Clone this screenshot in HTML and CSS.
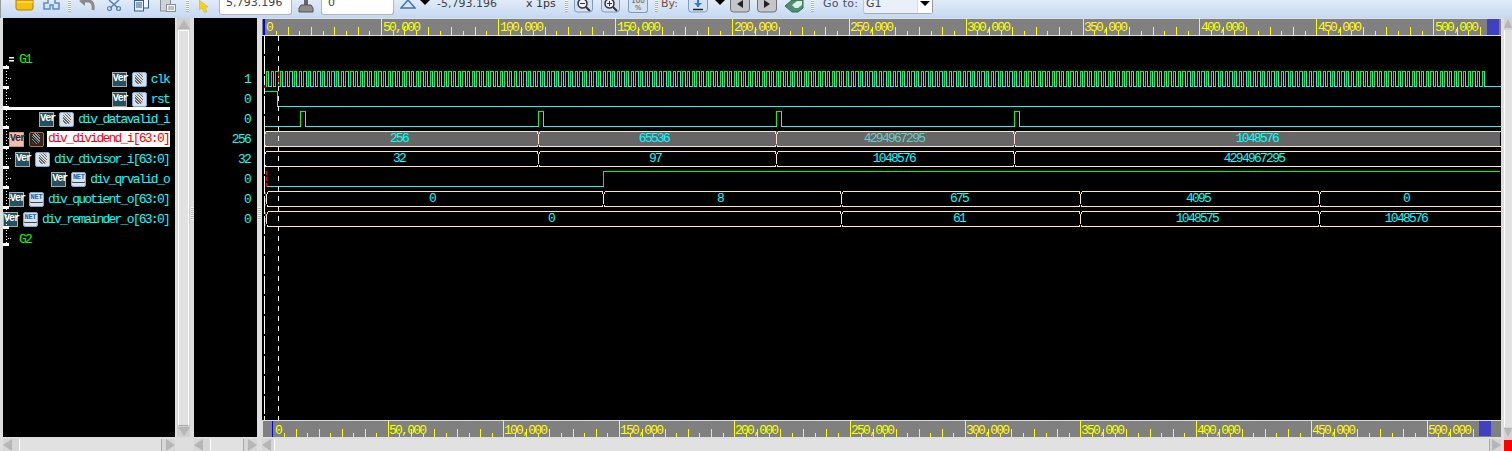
FILE: index.html
```html
<!DOCTYPE html>
<html lang="en">
<head>
<meta charset="utf-8">
<title>nWave</title>
<link rel="stylesheet" href="styles.css">
</head>
<body>
<header class="toolbar">
  <svg class="ti folder" width="19" height="11" viewBox="0 0 19 11"><path d="M1 0H18V1L18 8Q18 10 16 10H3Q1 10 1 8Z" fill="#f4c20d" stroke="#a98208"/><path d="M2 2H18" stroke="#ffe680"/></svg>
  <svg class="ti hier" width="17" height="10" viewBox="0 0 17 10"><path d="M5 0V3H1V9H7V5H10V9H16V3H12V0" fill="none" stroke="#5b8cc4" stroke-width="1.5"/></svg>
  <span class="grip g1"></span>
  <svg class="ti undo" width="16" height="11" viewBox="0 0 16 11"><path d="M4 1H10Q15 2 14 10" fill="none" stroke="#8b8b8b" stroke-width="3"/><path d="M0 1L6 -3V6Z" fill="#8b8b8b"/></svg>
  <svg class="ti scis" width="14" height="11" viewBox="0 0 14 11"><path d="M2 0L11 8M12 0L3 8" stroke="#5680b0" stroke-width="1.5"/><circle cx="2.500" cy="8.500" r="2" fill="none" stroke="#5680b0" stroke-width="1.200"/><circle cx="11.500" cy="8.500" r="2" fill="none" stroke="#5680b0" stroke-width="1.200"/></svg>
  <svg class="ti copy" width="15" height="12" viewBox="0 0 15 12"><rect x="4.500" y="-3" width="10" height="11" fill="#f4f7fb" stroke="#2f5f9c"/><rect x=".5" y="0.500" width="9" height="10.500" fill="#e8eef6" stroke="#2f5f9c"/><path d="M2 3H8M2 5H8M2 7H8" stroke="#2f5f9c"/></svg>
  <svg class="ti paste" width="16" height="12" viewBox="0 0 16 12"><rect x=".5" y="-2" width="10" height="13" fill="#cfd3d8" stroke="#8a8f96"/><rect x="6.500" y="4.500" width="9" height="7" fill="#f0f2f4" stroke="#8a8f96"/><path d="M8 7H14M8 9H14" stroke="#8a8f96"/></svg>
  <span class="grip g2"></span>
  <svg class="ti cursor" width="10" height="13" viewBox="0 0 10 13"><path d="M0 0L9 7H6L8 12L5 12L3 8L0 10Z" fill="#fbd20f" stroke="#d4a80a" stroke-width=".5"/></svg>
  <div class="field f1">5,793.196</div>
  <svg class="ti stamp" width="16" height="13" viewBox="0 0 16 13"><path d="M6 0H10V5H6Z" fill="#666"/><path d="M3 5H13L15 8V12H1V8Z" fill="#8d8d8d" stroke="#555"/></svg>
  <div class="field f2">0</div>
  <svg class="ti tri" width="16" height="9" viewBox="0 0 16 9"><path d="M8 0L15 8H1Z" fill="#dbe6f5" stroke="#3f74b5" stroke-width="1.500"/></svg>
  <span class="drop d1"></span>
  <span class="tl delta">-5,793.196</span>
  <span class="tl unit">x 1ps</span>
  <span class="grip g3"></span>
  <svg class="ti tb zo" width="19" height="13" viewBox="0 0 19 13"><rect x=".5" y="-4" width="18" height="16" rx="3" fill="#d4e1f2" stroke="#7d9bbf"/><circle cx="8.500" cy="3.500" r="4.500" fill="#eef" stroke="#333" stroke-width="1.500"/><path d="M6 3.500H11" stroke="#333"/><path d="M12 7L16 11" stroke="#333" stroke-width="2"/></svg>
  <svg class="ti tb zi" width="19" height="13" viewBox="0 0 19 13"><rect x=".5" y="-4" width="18" height="16" rx="3" fill="#d4e1f2" stroke="#7d9bbf"/><circle cx="8.500" cy="3.500" r="4.500" fill="#eef" stroke="#333" stroke-width="1.500"/><path d="M6 3.500H11M8.500 1V6" stroke="#333"/><path d="M12 7L16 11" stroke="#333" stroke-width="2"/></svg>
  <div class="pct"><span>100</span><span>%</span></div>
  <span class="grip g4"></span>
  <span class="tl by">By:</span>
  <svg class="ti tb byb" width="20" height="13" viewBox="0 0 20 13"><rect x=".5" y="-4" width="19" height="16" rx="3" fill="#d4e1f2" stroke="#7d9bbf"/><path d="M10 0V7" stroke="#3a78d8" stroke-width="2"/><path d="M6 3L10 7L14 3" fill="#3a78d8"/><path d="M5 9.500H15" stroke="#222" stroke-width="1.500"/></svg>
  <span class="drop d2"></span>
  <svg class="ti nl" width="20" height="13" viewBox="0 0 20 13"><rect x=".5" y="-4" width="19" height="16" rx="3" fill="#c4c6c9" stroke="#6e7073"/><path d="M13 0V8L7 4Z" fill="#222"/></svg>
  <svg class="ti nr" width="20" height="13" viewBox="0 0 20 13"><rect x=".5" y="-4" width="19" height="16" rx="3" fill="#c4c6c9" stroke="#6e7073"/><path d="M7 0V8L13 4Z" fill="#222"/></svg>
  <svg class="ti grn" width="20" height="13" viewBox="0 0 20 13"><path d="M1 6L8 0H19V8L14 12H8Z" fill="#4d8f72" stroke="#2f6b52"/><path d="M8 5L13 1H18V5L14 8H11Z" fill="#dcefe6"/></svg>
  <span class="grip g5"></span>
  <span class="tl goto">Go to:</span>
  <div class="combo"><span class="combo-v">G1</span><span class="combo-b"><span class="drop d3"></span></span></div>
</header>

<main class="main">
  <section class="col c-sig">
    <div class="pane sig-pane">
      <svg class="tree" id="tree" width="14" height="419" viewBox="0 0 14 419"></svg>
      <div class="insert"></div>
      <div class="row grp">G1</div>
      <div class="row"><span class="ver">Ver</span><span class="wire"></span><span class="nm">clk</span></div>
      <div class="row"><span class="ver">Ver</span><span class="wire"></span><span class="nm">rst</span></div>
      <div class="row"><span class="ver">Ver</span><span class="wire"></span><span class="nm">div_datavalid_i</span></div>
      <div class="row sel"><span class="ver">Ver</span><span class="wire"></span><span class="nm">div_dividend_i[63:0]</span></div>
      <div class="row"><span class="ver">Ver</span><span class="wire"></span><span class="nm">div_divisor_i[63:0]</span></div>
      <div class="row"><span class="ver">Ver</span><span class="net">NET</span><span class="nm">div_qrvalid_o</span></div>
      <div class="row"><span class="ver">Ver</span><span class="net">NET</span><span class="nm">div_quotient_o[63:0]</span></div>
      <div class="row"><span class="ver">Ver</span><span class="net">NET</span><span class="nm">div_remainder_o[63:0]</span></div>
      <div class="row grp">G2</div>
    </div>
    <div class="hs"><span class="al"></span><span class="thumb"></span><span class="ar"></span></div>
  </section>

  <section class="vs">
    <span class="au"></span><span class="vthumb"></span><span class="ad"></span>
  </section>
  <div class="split s1"><span class="sgrip"></span></div>

  <section class="col c-val">
    <div class="pane val-pane">
      <div class="val">1</div><div class="val">0</div><div class="val">0</div><div class="val">256</div>
      <div class="val">32</div><div class="val">0</div><div class="val">0</div><div class="val">0</div>
    </div>
    <div class="hs"><span class="al"></span><span class="thumb"></span><span class="ar"></span></div>
  </section>
  <div class="split s2"><span class="sgrip"></span></div>

  <section class="col c-wave">
    <svg class="wave" id="wave" width="1239" height="419" viewBox="262 18 1239 419">
      <rect class="rul" x="262" y="19" width="1239" height="16"/>
      <rect class="rline" x="262" y="35" width="1239" height="1"/>
      <rect class="blk" x="262" y="36" width="1239" height="384"/>
      <rect class="rline" x="262" y="420" width="1239" height="1"/>
      <rect class="rul" x="263" y="421" width="1238" height="16"/>
      <rect class="thumbb" x="1487" y="19" width="12" height="16"/>
      <rect class="thumbb" x="1479" y="421" width="12" height="15"/>
      <rect class="bluel" x="263" y="19" width="2" height="16"/>
      <rect class="bluel" x="272" y="421" width="1" height="16"/>
      <g id="ticks" class="tick"></g>
      <g class="rt">
        <text x="266" y="31">0</text><text x="383" y="31">50,000</text><text x="500" y="31">100,000</text><text x="617" y="31">150,000</text><text x="734" y="31">200,000</text><text x="850" y="31">250,000</text><text x="967" y="31">300,000</text><text x="1084" y="31">350,000</text><text x="1201" y="31">400,000</text><text x="1318" y="31">450,000</text><text x="1435" y="31">500,000</text>
        <text x="275" y="434">0</text><text x="389" y="434">50,000</text><text x="504" y="434">100,000</text><text x="620" y="434">150,000</text><text x="735" y="434">200,000</text><text x="851" y="434">250,000</text><text x="966" y="434">300,000</text><text x="1081" y="434">350,000</text><text x="1197" y="434">400,000</text><text x="1312" y="434">450,000</text><text x="1428" y="434">500,000</text>
      </g>
      <rect class="busfill" x="265" y="131" width="1235" height="15"/>
      <path id="bus" class="bus" d=""/>
      <path id="hi" class="hi" d=""/>
      <path id="lo" class="lo" d=""/>
      <path class="marker m1" d="M264.500 36V420"/>
      <path class="marker m2" d="M278.500 36V420"/>
      <path class="red" d="M265.500 171.500H266.500V186.500H265.500M265.500 192V206M265.500 212V226M278.500 72V86M264.500 85V88"/>
      <g class="wt">
        <text x="399" y="142">256</text><text x="654" y="142">65536</text><text x="894" y="142" class="dim">4294967295</text><text x="1257" y="142">1048576</text>
        <text x="399" y="162">32</text><text x="655" y="162">97</text><text x="894" y="162">1048576</text><text x="1254" y="162">4294967295</text>
        <text x="432" y="202">0</text><text x="720" y="202">8</text><text x="959" y="202">675</text><text x="1198" y="202">4095</text><text x="1406" y="202">0</text>
        <text x="551" y="222">0</text><text x="959" y="222">61</text><text x="1197" y="222">1048575</text><text x="1406" y="222">1048576</text>
      </g>
    </svg>
    <div class="hs"><span class="al"></span><span class="thumb"></span><span class="ar ar-w"></span></div>
  </section>

  <section class="rs">
    <span class="au au-r"></span><span class="rtrack"></span><span class="ad ad-r"></span>
    <span class="redsq"></span>
  </section>
</main>
<script src="script.js"></script>
</body>
</html>
```
FILE: styles.css
```css
* { box-sizing: border-box; }
html, body { margin: 0; padding: 0; }
body {
  width: 1512px;
  height: 451px;
  overflow: hidden;
  background: #dedede;
  font-family: "Liberation Mono", monospace;
  display: flex;
  flex-direction: column;
}

/* toolbar, cut off by the top of the picture */
.toolbar {
  height: 18px;
  flex: none;
  display: flex;
  align-items: flex-start;
  overflow: hidden;
  padding-left: 1px;
  border-left: 1px solid #9a9a9a;
  background: linear-gradient(#e1ebf8, #c5d8f2);
  font-family: "DejaVu Sans", sans-serif;
  font-size: 11px;
  color: #44526a;
}
.ti { flex: none; display: block; }
.folder { margin-left: 13px; }
.hier { margin-left: 9px; }
.undo { margin-left: 8px; }
.scis { margin-left: 12px; }
.copy { margin-left: 13px; }
.paste { margin-left: 11px; }
.cursor { margin-left: 10px; }
.stamp { margin-left: 6px; }
.tri { margin-left: 6px; }
.zo { margin-left: 6px; }
.zi { margin-left: 8px; }
.byb { margin-left: 9px; }
.nl { margin-left: 5px; }
.nr { margin-left: 7px; }
.grn { margin-left: 7px; }

.grip {
  flex: none;
  width: 3px;
  height: 12px;
  background: repeating-linear-gradient(#ffffff 0 1px, #a9b2bd 1px 2px);
}
.g1 { margin-left: 8px; }
.g2 { margin-left: 10px; }
.g3 { margin-left: 9px; }
.g4 { margin-left: 7px; }
.g5 { margin-left: 7px; }

.field {
  flex: none;
  width: 73px;
  height: 16px;
  margin-top: -1px;
  padding-left: 6px;
  background: #fff;
  border: 1px solid #b5b5b5;
  border-top: 0;
  border-radius: 0 0 3px 3px;
  color: #444;
  line-height: 8px;
  letter-spacing: .05px;
}
.f1 { margin-left: 10px; }
.f2 { margin-left: 7px; }

.drop {
  flex: none;
  width: 0;
  height: 0;
  border-left: 5px solid transparent;
  border-right: 5px solid transparent;
  border-top: 5px solid #000;
}
.d1 { margin-left: 4px; }
.d2 { margin-left: 7px; }

.tl { flex: none; white-space: nowrap; line-height: 8px; }
.delta { margin-left: 7px; width: 60px; color: #444; }
.unit { margin-left: 29px; width: 30px; color: #333; }
.by { margin-left: 3px; width: 18px; color: #7a4a3a; }
.goto { margin-left: 9px; width: 34px; letter-spacing: .3px; }

.pct {
  flex: none;
  width: 20px;
  height: 13px;
  margin-left: 8px;
  background: #d4e1f2;
  border: 1px solid #7d9bbf;
  border-top: 0;
  border-radius: 0 0 3px 3px;
  font-size: 7px;
  line-height: 7px;
  color: #555;
  text-align: center;
  display: flex;
  flex-direction: column;
  justify-content: flex-end;
}
.combo {
  flex: none;
  width: 70px;
  height: 14px;
  margin-left: 6px;
  display: flex;
  background: #e9f0fa;
  border-right: 1px solid #999;
  border-bottom: 1px solid #aaa;
  border-left: 1px solid #c5c5c5;
  border-radius: 0 0 3px 3px;
}
.combo-v { flex: 1; padding-left: 2px; line-height: 8px; color: #444; }
.combo-b {
  width: 15px;
  background: #fff;
  display: flex;
  justify-content: center;
  padding-top: 1px;
  border-left: 1px solid #ddd;
}

/* main panes */
.main { flex: 1; display: flex; min-height: 0; }
.col { flex: none; display: flex; flex-direction: column; }
.c-sig { width: 172px; margin-left: 3px; }
.c-val { width: 63px; }
.c-wave { width: 1239px; }
.pane { flex: 1; background: #000; min-height: 0; position: relative; }

.sig-pane { padding: 31px 5px 0 0; overflow: hidden; }
.row {
  height: 20px;
  display: flex;
  justify-content: flex-end;
  align-items: center;
  font-size: 13px;
  letter-spacing: -1.75px;
  color: #00ffff;
  white-space: nowrap;
}
.grp { justify-content: flex-start; padding: 1px 0 0 16px; color: #00ff00; }
.nm { margin-left: 4px; padding: 1px 1px 0 0; }
.sel .nm {
  margin-left: 3px;
  padding: 0 1px;
  background: #fff;
  color: #ff0000;
  line-height: 16px;
}
.ver {
  flex: none;
  width: 15px;
  height: 15px;
  background: #24505f;
  border: 1px solid #a8a8a8;
  color: #fff;
  font-size: 10px;
  font-weight: bold;
  letter-spacing: -1px;
  line-height: 12px;
  text-align: center;
}
.sel .ver { background: #f2bfae; color: #2a2a2a; border-color: #c98; }
.wire, .net {
  flex: none;
  width: 15px;
  height: 15px;
  margin-left: 5px;
  background: #d5e2f0;
  border: 1px solid #7ea6d0;
  border-radius: 2px;
  display: flex;
  justify-content: center;
}
.wire::before {
  content: "";
  width: 8px;
  height: 11px;
  border-radius: 4px;
  background: repeating-linear-gradient(45deg, #666 0 1px, #dcdcdc 1px 2px);
}
.sel .wire { background: #35261d; border-color: #a8703c; }
.sel .wire::before { background: repeating-linear-gradient(45deg, #222 0 1px, #999 1px 2px); }
.net {
  font-size: 7px;
  font-weight: bold;
  letter-spacing: -.3px;
  color: #2a5fa8;
  line-height: 9px;
  box-shadow: inset 0 -3px 0 #d5e2f0, inset 0 -4px 0 #444;
}
.tree { position: absolute; left: 0; top: 0; }
.insert {
  position: absolute;
  left: 0;
  top: 89px;
  width: 167px;
  height: 3px;
  background: #fff;
}

.val-pane { padding: 51px 7px 0 0; }
.val {
  height: 20px;
  line-height: 21px;
  text-align: right;
  font-size: 13px;
  letter-spacing: -1.75px;
  color: #00ffff;
}

/* horizontal scrollbars */
.hs {
  flex: none;
  height: 12px;
  margin-top: 2px;
  display: flex;
  align-items: stretch;
  background: #d6d6d6;
}
.thumb { flex: 1; background: #e1e1e1; border-left: 1px solid #fff; border-right: 1px solid #aaa; margin: 0 2px; }
.al, .ar { flex: none; width: 14px; display: flex; align-items: center; }
.al::before {
  content: "";
  border-top: 6px solid transparent;
  border-bottom: 6px solid transparent;
  border-right: 9px solid #b6b6b6;
}
.ar { width: 11px; justify-content: flex-end; }
.ar::before {
  content: "";
  border-top: 6px solid transparent;
  border-bottom: 6px solid transparent;
  border-left: 9px solid #b6b6b6;
}
.c-wave .al { width: 10px; }
.ar-w { width: 9px; }

/* vertical scrollbars */
.vs {
  flex: none;
  width: 13px;
  margin: 0 0 14px 2px;
  background: #d0d0d0;
  display: flex;
  flex-direction: column;
  align-items: center;
}
.au {
  flex: none;
  width: 0;
  height: 0;
  margin-top: 2px;
  border-left: 6px solid transparent;
  border-right: 6px solid transparent;
  border-bottom: 9px solid #b6b6b6;
}
.ad {
  flex: none;
  width: 0;
  height: 0;
  margin: 1px 0;
  border-left: 6px solid transparent;
  border-right: 6px solid transparent;
  border-top: 9px solid #b6b6b6;
}
.vthumb {
  flex: 1;
  width: 11px;
  margin-top: 1px;
  background: #e1e1e1;
  border: 1px solid #fff;
  border-bottom-color: #aaa;
}
.split {
  flex: none;
  display: flex;
  align-items: center;
  justify-content: center;
  padding-bottom: 42px;
}
.s1 { width: 4px; }
.s2 { width: 5px; }
.sgrip {
  width: 3px;
  height: 13px;
  background: repeating-linear-gradient(#f4f4f4 0 1px, #bdbdbd 1px 2px);
}

.rs {
  flex: none;
  width: 8px;
  margin-left: 3px;
  display: flex;
  flex-direction: column;
  align-items: center;
  background: #d4d4d4;
}
.au-r { border-left-width: 4px; border-right-width: 4px; border-bottom-width: 9px; margin-top: 1px; }
.rtrack { flex: 1; width: 100%; margin-top: 2px; background: #e1e1e1; border-left: 1px solid #fff; }
.ad-r { border-left-width: 4px; border-right-width: 4px; margin: 1px 0 3px; }
.redsq { flex: none; width: 8px; height: 11px; background: #ff0000; }

/* waveform canvas */
.wave { display: block; flex: none; shape-rendering: crispEdges; }
.rul { fill: #808080; }
.rline { fill: #dcdcdc; }
.blk { fill: #000; }
.thumbb { fill: #4040c0; }
.bluel { fill: #0000ff; }
.tick { stroke: #ffff00; fill: none; }
.rt text {
  fill: #ffff00;
  font-size: 13px;
  letter-spacing: -1.75px;
}
.wt text {
  fill: #00ffff;
  font-size: 13px;
  letter-spacing: -1.75px;
  text-anchor: middle;
}
.wt text.dim { fill: #66cccc; }
.busfill { fill: #666666; }
.bus { stroke: #ffe2cc; fill: none; }
.hi { stroke: #00ff00; fill: none; }
.lo { stroke: #00ffff; fill: none; }
.marker { stroke: #fff; fill: none; }
.m1 { stroke-dasharray: 18 2; }
.m2 { stroke-dasharray: 5 5; }
.red { stroke: #ff0000; stroke-dasharray: 4 2; fill: none; }
```
FILE: script.js
```js
// Draws the repetitive parts of the wave view: ruler ticks, clock, pulses, bus outlines, tree marks.
(function () {
  var NS = "http://www.w3.org/2000/svg";
  function r(x) { return Math.round(x) + 0.5; }

  // ruler ticks
  var tickD = "";
  function ruler(x0, step, bottom, end) {
    for (var i = 1; x0 + i * step < end; i++) {
      var x = r(x0 + i * step);
      var h = i % 10 === 0 ? 16 : (i % 2 === 0 ? 8 : 4);
      tickD += "M" + x + " " + bottom + "v-" + h;
    }
  }
  ruler(264.2, 11.69, 35, 1485);
  ruler(272.5, 11.54, 437, 1478);
  var p = document.createElementNS(NS, "path");
  p.setAttribute("d", tickD);
  document.getElementById("ticks").appendChild(p);

  // digital signals
  var hi = "", lo = "";
  function pulse(rise, fall, t, b, next) {
    hi += "M" + r(rise) + " " + b + "V" + t + "H" + r(fall);
    lo += "M" + r(fall) + " " + t + "V" + b + "H" + r(next);
  }
  // clk
  var period = 4.676, x = 266;
  while (x + period < 1486) {
    pulse(x, x + period / 2, 71.5, 86.5, x + period);
    x += period;
  }
  pulse(x, x + 2, 71.5, 86.5, 1500);
  // rst
  hi += "M264 91.5H" + r(276.6);
  lo += "M" + r(276.6) + " 91.5V106.5H1500";
  // datavalid
  lo += "M264 126.5H" + r(300);
  pulse(300, 305, 111.5, 126.5, 538);
  pulse(538, 543, 111.5, 126.5, 776);
  pulse(776, 781, 111.5, 126.5, 1014);
  pulse(1014, 1019, 111.5, 126.5, 1500);
  // qrvalid
  lo += "M267 186.5H" + r(603);
  hi += "M" + r(603) + " 186.5V171.5H1500";
  document.getElementById("hi").setAttribute("d", hi);
  document.getElementById("lo").setAttribute("d", lo);

  // buses: top, bottom, transition points
  var bus = "";
  function drawBus(t, xs) {
    var b = t + 15, T = t + 0.5, B = b + 0.5;
    xs.forEach(function (tx, i) {
      var c = tx + 0.5;
      bus += "M" + c + " " + (t + 3) + "V" + (b - 2);
      bus += "M" + (c + 1) + " " + T + "v2M" + (c + 1) + " " + B + "v-2";
      var nx = i + 1 < xs.length ? xs[i + 1] : 1501;
      bus += "M" + (c + 1) + " " + T + "H" + (nx - 0.5);
      bus += "M" + (c + 1) + " " + B + "H" + (nx - 0.5);
      if (i + 1 < xs.length) {
        bus += "M" + (nx - 0.5) + " " + T + "v2M" + (nx - 0.5) + " " + B + "v-2";
      }
    });
  }
  drawBus(131, [264, 538, 776, 1014]);
  drawBus(151, [264, 538, 776, 1014]);
  drawBus(191, [266, 603, 841, 1080, 1319]);
  drawBus(211, [266, 841, 1080, 1319]);
  document.getElementById("bus").setAttribute("d", bus);

  // hierarchy tree marks in the signal list (pane coordinates)
  var tree = document.getElementById("tree");
  var html = '<path d="M3.500 47V226" stroke="#fff" stroke-dasharray="1 2"/>';
  html += '<rect x="6" y="39" width="5" height="1.500" fill="#fff"/><rect x="6" y="42" width="5" height="1.500" fill="#fff"/>';
  for (var y = 49; y < 210; y += 20) {
    html += '<rect x="0" y="' + (y - 1) + '" width="6" height="3" fill="#fff"/>';
    html += '<path d="M5 ' + (y + 11.5) + 'H9" stroke="#fff" stroke-dasharray="1 1"/>';
  }
  html += '<rect x="0" y="225" width="6" height="3" fill="#fff"/>';
  tree.innerHTML = html;
})();
```
